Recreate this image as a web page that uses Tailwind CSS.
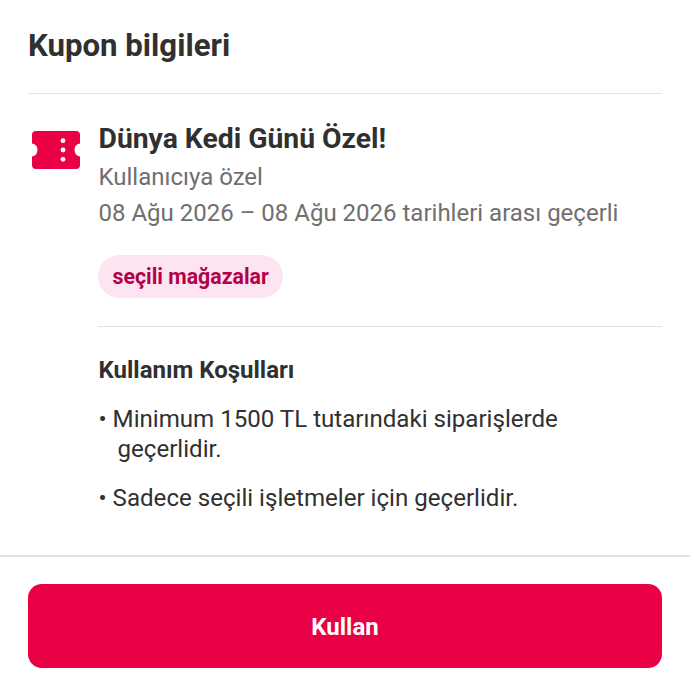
<!DOCTYPE html>
<html lang="tr">
<head>
  <meta charset="UTF-8">
  <title>Kupon bilgileri</title>
  <script src="https://cdn.jsdelivr.net/npm/@tailwindcss/browser@4"></script>
</head>
<body class="bg-white font-['Roboto',sans-serif] text-[#303030]">
  <div class="w-[690px] h-[689px] flex flex-col overflow-hidden">
    <!-- Header -->
    <div class="mx-[28px] h-[94px] border-b border-[#e2e2e2] flex items-start pt-[27px]">
      <h1 class="text-[31.2px] leading-[38px] font-bold">Kupon bilgileri</h1>
    </div>

    <!-- Coupon -->
    <div class="flex flex-1 pl-[28px] pr-[28px]">
      <div class="w-[70px] shrink-0 pt-[37px] pl-[4px]">
        <svg width="48" height="38" viewBox="0 0 48 38">
          <path fill="#e90045" d="M4 0h40a4 4 0 0 1 4 4v8.5a6.6 6.6 0 0 0 0 13V34a4 4 0 0 1-4 4H4a4 4 0 0 1-4-4v-8.500a6.600 6.600 0 0 0 0-13V4a4 4 0 0 1 4-4z"/>
          <circle cx="31" cy="9.7" r="2.400" fill="#fff"/>
          <circle cx="31" cy="19" r="2.400" fill="#fff"/>
          <circle cx="31" cy="28.300" r="2.400" fill="#fff"/>
        </svg>
      </div>
      <div class="flex-1">
        <h2 class="mt-[27px] pl-[0.5px] text-[28.3px] leading-[36px] font-bold">Dünya Kedi Günü Özel!</h2>
        <p class="mt-[4px] pl-[0.5px] text-[24px] leading-[32px] text-[#6f6f6f]">Kullanıcıya özel</p>
        <p class="mt-[4px] pl-[0.5px] text-[24px] leading-[32px] text-[#6f6f6f]">08 Ağu 2026 – 08 Ağu 2026 tarihleri arası geçerli</p>
        <span class="inline-block mt-[26px] h-[43px] px-[14.5px] rounded-full bg-[#fce4f0] text-[#b3004a] text-[21.3px] leading-[43px] font-bold">seçili mağazalar</span>
        <div class="mt-[28px] border-t border-[#e2e2e2]">
          <h3 class="mt-[27px] pl-[0.5px] text-[24px] leading-[32px] font-bold">Kullanım Koşulları</h3>
          <p class="mt-[18px] pl-[0.5px] text-[24.1px] leading-[30px]">• Minimum 1500 TL tutarındaki siparişlerde<br><span class="pl-[19px]">geçerlidir.</span></p>
          <p class="mt-[19px] pl-[0.5px] text-[24.1px] leading-[30px]">• Sadece seçili işletmeler için geçerlidir.</p>
        </div>
      </div>
    </div>

    <!-- Footer -->
    <div class="h-[134px] border-t-2 border-[#e0e0e0] px-[28px] pt-[27px]">
      <button class="w-full h-[84px] pt-px rounded-[14px] bg-[#e90045] text-white text-[24px] font-bold">Kullan</button>
    </div>
  </div>
</body>
</html>
